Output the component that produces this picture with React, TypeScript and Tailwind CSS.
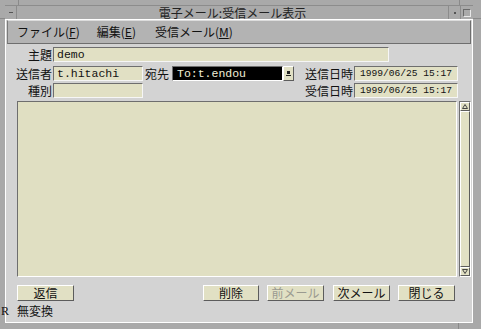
import React from "react";

const inputCls =
  "h-[15px] bg-[#e1e0c4] border border-t-[#6e6e6e] border-l-[#6e6e6e] border-b-[#f6f6f6] border-r-[#f6f6f6] font-['Liberation_Mono',monospace] text-[11.5px] leading-[13px] pl-[3px] text-[#111] whitespace-nowrap overflow-hidden";

const dateCls =
  "h-[15px] w-[104px] mr-[14px] bg-[#e1e0c4] border border-t-[#6e6e6e] border-l-[#6e6e6e] border-b-[#f6f6f6] border-r-[#f6f6f6] font-['Liberation_Mono',monospace] text-[9.6px] leading-[13px] pl-[5px] text-[#111] whitespace-nowrap overflow-hidden";

const btnCls =
  "h-[16px] bg-[#e1e0c4] border border-t-white border-l-white border-b-[#5c5c5c] border-r-[#5c5c5c] text-[12px] leading-[14px] text-center";

export default function App() {
  return (
    <div className="w-[481px] h-[329px] bg-[#a9a9a9] relative overflow-hidden font-['Noto_Sans_CJK_JP',sans-serif] text-[12px] text-[#111] pt-[5px] pl-[5px] flex flex-col">
      {/* frame ticks */}
      <div className="absolute left-[18px] top-0 w-px h-[5px] bg-[#8a8a8a]" />
      <div className="absolute left-[459px] top-0 w-px h-[5px] bg-[#8a8a8a]" />
      <div className="absolute left-[458px] bottom-0 w-px h-[6px] bg-[#8a8a8a]" />
      <div className="absolute left-0 top-[18px] w-[5px] h-px bg-[#8a8a8a]" />
      <div className="absolute right-0 top-[18px] w-[8px] h-px bg-[#8a8a8a]" />

      <div className="w-[468px] h-[318px] flex flex-col">
        {/* title bar */}
        <div className="h-[14px] flex border-t border-[#8c8c8c] bg-[#aaaaaa]">
          <div className="w-[12px] h-full border-r border-[#8c8c8c] flex items-center justify-center">
            <div className="w-[4px] h-px bg-[#555]" />
          </div>
          <div className="flex-1 text-center text-[12px] leading-[13px] text-[#222]">
            電子メール:受信メール表示
          </div>
          <div className="w-[12px] h-full border-l border-[#8c8c8c] flex items-center justify-center">
            <div className="w-[2px] h-[2px] bg-[#555]" />
          </div>
          <div className="w-[13px] h-full border-l border-[#8c8c8c] flex items-center justify-center">
            <div className="w-[8px] h-[8px] border border-t-[#6a6a6a] border-l-[#6a6a6a] border-b-[#e8e8e8] border-r-[#e8e8e8]" />
          </div>
        </div>

        {/* body */}
        <div className="flex-1 flex flex-col bg-[#d3d3d3] border-t border-l border-b border-white border-r border-r-white">
          {/* menu bar */}
          <div className="ml-px mr-px h-[24px] bg-[#b3b3b3] border border-t-[#dcdcdc] border-l-[#7a7a7a] border-b-[#6e6e6e] border-r-[#6e6e6e] flex items-center pl-[9px] text-[12px] leading-[14px]">
            <span>
              ファイル(<span className="underline">F</span>)
            </span>
            <span className="ml-[17px]">
              編集(<span className="underline">E</span>)
            </span>
            <span className="ml-[19px]">
              受信メール(<span className="underline">M</span>)
            </span>
          </div>

          {/* row 1 */}
          <div className="mt-[3px] flex items-center h-[15px]">
            <div className="w-[47px] text-right pr-px leading-[15px]">主題</div>
            <div className={inputCls + " w-[336px]"}>demo</div>
          </div>

          {/* row 2 */}
          <div className="mt-[4px] flex items-center h-[15px]">
            <div className="w-[47px] text-right pr-px leading-[15px]">送信者</div>
            <div className={inputCls + " w-[90px]"}>t.hitachi</div>
            <div className="w-[29px] pl-[2px] leading-[15px]">宛先</div>
            <div className="w-[111px] h-[15px] bg-black border border-t-[#6e6e6e] border-l-[#6e6e6e] border-b-white border-r-white font-['Liberation_Mono',monospace] text-[11.5px] leading-[13px] pl-[4px] text-[#f0efd8] whitespace-nowrap overflow-hidden">
              To:t.endou
            </div>
            <div className="w-[11px] h-[15px] bg-[#e1e0c4] border border-t-white border-l-white border-b-[#5c5c5c] border-r-[#5c5c5c] flex items-center justify-center">
              <div className="w-[5px] h-[6px] flex flex-col items-center">
                <div className="w-[3px] h-[3px] bg-[#222]" />
                <div className="w-[5px] h-px bg-[#222] mt-px" />
              </div>
            </div>
            <div className="ml-auto leading-[15px] pr-px">送信日時</div>
            <div className={dateCls}>1999/06/25 15:17</div>
          </div>

          {/* row 3 */}
          <div className="mt-[2px] flex items-center h-[15px]">
            <div className="w-[47px] text-right pr-px leading-[15px]">種別</div>
            <div className={inputCls + " w-[90px]"}></div>
            <div className="ml-auto leading-[15px] pr-px">受信日時</div>
            <div className={dateCls}>1999/06/25 15:17</div>
          </div>

          {/* text area + scrollbar */}
          <div className="mt-[3px] flex h-[176px] ml-[11px]">
            <div className="w-[440px] h-full bg-[#e0dfc2] border border-t-[#6e6e6e] border-l-[#6e6e6e] border-b-white border-r-white" />
            <div className="ml-[2px] w-[12px] h-full bg-[#d3d3d3] border border-t-[#6e6e6e] border-l-[#6e6e6e] border-b-white border-r-white flex flex-col">
              <div className="h-[9px] bg-[#e1e0c4] border border-t-white border-l-white border-b-[#5c5c5c] border-r-[#5c5c5c] flex items-center justify-center">
                <svg width="6" height="5" viewBox="0 0 6 5">
                  <path d="M3 0.5 L5.5 4.5 L0.5 4.5 Z" fill="none" stroke="#444" strokeWidth="1" />
                </svg>
              </div>
              <div className="flex-1 bg-[#e1e0c4] border border-t-white border-l-white border-b-[#5c5c5c] border-r-[#5c5c5c]" />
              <div className="h-[9px] bg-[#e1e0c4] border border-t-white border-l-white border-b-[#5c5c5c] border-r-[#5c5c5c] flex items-center justify-center">
                <svg width="6" height="5" viewBox="0 0 6 5">
                  <path d="M0.5 0.5 L5.5 0.5 L3 4.5 Z" fill="none" stroke="#444" strokeWidth="1" />
                </svg>
              </div>
            </div>
          </div>

          {/* buttons */}
          <div className="mt-[8px] flex h-[16px]">
            <div className={btnCls + " ml-[11px] w-[57px]"}>返信</div>
            <div className={btnCls + " ml-[129px] w-[56px]"}>削除</div>
            <div className={btnCls + " ml-[8px] w-[57px] text-[#9a9a90]"}>前メール</div>
            <div className={btnCls + " ml-[9px] w-[57px]"}>次メール</div>
            <div className={btnCls + " ml-[8px] w-[57px]"}>閉じる</div>
          </div>

          {/* status */}
          <div className="mt-[2px] h-[16px] flex items-center">
            <span className="ml-[11px] leading-[16px]">無変換</span>
          </div>
        </div>
      </div>
      <div className="absolute left-[1px] top-[304px] font-['Liberation_Serif',serif] text-[12px] leading-[14px] text-[#111]">
        R
      </div>
    </div>
  );
}
